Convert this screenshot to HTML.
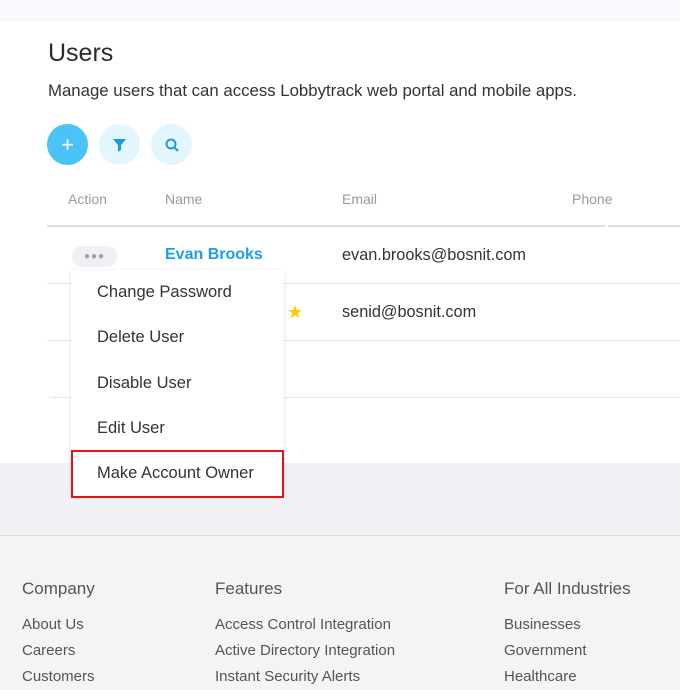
<!DOCTYPE html>
<html><head><style>
body{margin:0;width:680px;height:680px;overflow:hidden;font-family:"Liberation Sans",sans-serif;background:#f4f4f4;position:relative}
.a{position:absolute}
.t{position:absolute;white-space:nowrap}
</style></head><body>
<div class="a" style="left:0;top:0;width:680px;height:22px;background:#f8f9fc"></div>
<div class="a" style="left:0;top:22px;width:680px;height:441px;background:#fff"></div>
<div class="a" style="left:0;top:463px;width:680px;height:72px;background:#eff1f5"></div>
<div class="a" style="left:0;top:535px;width:680px;height:1px;background:#dcdcdc"></div>
<div class="t" style="left:48px;top:39px;font-size:25px;color:#2b2b2b">Users</div>
<div class="t" style="left:48px;top:81px;font-size:16.8px;color:#333">Manage users that can access Lobbytrack web portal and mobile apps.</div>
<div class="a" style="left:47px;top:124px;width:41px;height:41px;border-radius:50%;background:#4cc3f7;color:#fff;font-size:22px;text-align:center;line-height:41px">+</div>
<div class="a" style="left:99px;top:124px;width:41px;height:41px;border-radius:50%;background:#e3f6fd"><svg width="41" height="41"><path d="M14 15h13l-5 6v5l-3 2v-7z" fill="#1a9be0"/></svg></div>
<div class="a" style="left:151px;top:124px;width:41px;height:41px;border-radius:50%;background:#e3f6fd"><svg width="41" height="41"><circle cx="20" cy="20" r="4.5" fill="none" stroke="#1a9be0" stroke-width="2"/><path d="M23.5 23.5l3.5 3.5" stroke="#1a9be0" stroke-width="2"/></svg></div>
<div class="t" style="left:68px;top:191px;font-size:14px;color:#999">Action</div>
<div class="t" style="left:165px;top:191px;font-size:14px;color:#999">Name</div>
<div class="t" style="left:342px;top:191px;font-size:14px;color:#999">Email</div>
<div class="t" style="left:572px;top:191px;font-size:14px;color:#999">Phone</div>
<div class="a" style="left:47px;top:225px;width:558px;height:2px;background:#ddd"></div>
<div class="a" style="left:608px;top:225px;width:72px;height:2px;background:#ddd"></div>
<div class="a" style="left:72px;top:246px;width:45px;height:21px;border-radius:10px;background:#eef0f3;color:#9aa0aa;font-size:10px;text-align:center;line-height:21px;letter-spacing:1px">●●●</div>
<div class="t" style="left:165px;top:246px;font-size:16px;font-weight:bold;color:#1d9fe3">Evan Brooks</div>
<div class="t" style="left:342px;top:246px;font-size:16.3px;color:#333">evan.brooks@bosnit.com</div>
<div class="a" style="left:47px;top:283px;width:633px;height:1px;background:#e6e6e6"></div>
<div class="t" style="left:287px;top:302px;font-size:18px;color:#ffcc00">★</div>
<div class="t" style="left:342px;top:303px;font-size:16.3px;color:#333">senid@bosnit.com</div>
<div class="a" style="left:47px;top:340px;width:633px;height:1px;background:#e6e6e6"></div>
<div class="a" style="left:50px;top:397px;width:630px;height:1px;background:#e6e6e6"></div>
<div class="a" style="left:71px;top:270px;width:213px;height:226px;background:#fff;box-shadow:0 1px 4px rgba(0,0,0,.12)"></div>
<div class="t" style="left:97px;top:283px;font-size:16.5px;color:#333">Change Password</div>
<div class="t" style="left:97px;top:328px;font-size:16.5px;color:#333">Delete User</div>
<div class="t" style="left:97px;top:374px;font-size:16.5px;color:#333">Disable User</div>
<div class="t" style="left:97px;top:419px;font-size:16.5px;color:#333">Edit User</div>
<div class="a" style="left:71px;top:450px;width:209px;height:44px;border:2px solid #e0141b"></div>
<div class="t" style="left:97px;top:464px;font-size:16.5px;color:#333">Make Account Owner</div>
<div class="t" style="left:22px;top:579px;font-size:17px;color:#555">Company</div>
<div class="t" style="left:215px;top:579px;font-size:17px;color:#555">Features</div>
<div class="t" style="left:504px;top:579px;font-size:17px;color:#555">For All Industries</div>
<div class="t" style="left:22px;top:612px;font-size:15px;color:#555;line-height:26px">About Us<br>Careers<br>Customers</div>
<div class="t" style="left:215px;top:612px;font-size:15px;color:#555;line-height:26px">Access Control Integration<br>Active Directory Integration<br>Instant Security Alerts</div>
<div class="t" style="left:504px;top:612px;font-size:15px;color:#555;line-height:26px">Businesses<br>Government<br>Healthcare</div>
</body></html>
